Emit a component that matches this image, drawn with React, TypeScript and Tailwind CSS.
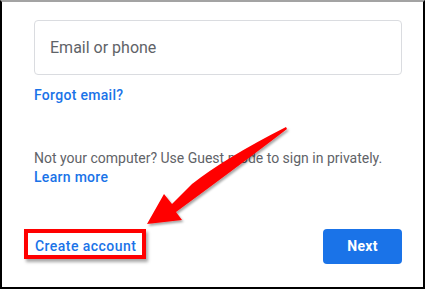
import React from "react";

export default function App() {
  return (
    <div className="w-[426px] h-[290px] bg-white" style={{ fontFamily: "Roboto, 'Liberation Sans', sans-serif" }}>
      <div className="relative w-[425px] h-[289px] border-2 border-black border-t-[#a3a3a3] bg-white">
        <div className="pl-[32px] pt-[18px]">
          <div className="w-[368px] h-[55px] rounded-[4px] border border-[#dadce0] flex items-center pl-[15px]">
            <span className="text-[16px] text-[#5f6368]">Email or phone</span>
          </div>
          <div className="mt-[10px] text-[14px] leading-[20px] font-medium tracking-[0.3px] text-[#1a73e8]">Forgot email?</div>
          <div className="mt-[44px] text-[14px] leading-[19px] text-[#5f6368]">
            Not your computer? Use Guest mode to sign in privately.
            <div className="font-medium tracking-[0.3px] text-[#1a73e8]">Learn more</div>
          </div>
          <div className="mt-[42px] flex items-start justify-between w-[368px]">
            <div className="-ml-[10px] border-4 border-[#ff0000] pl-[7px] pr-[6px] pt-[4px] pb-[0px] text-[14px] leading-[18px] font-medium tracking-[0.45px] text-[#1a73e8] shadow-[2px_3px_3px_rgba(0,0,0,0.35)]">
              Create account
            </div>
            <div className="w-[79px] h-[35px] rounded-[4px] bg-[#1a73e8] text-white text-[14px] font-bold tracking-[0.25px] flex items-center justify-center">
              Next
            </div>
          </div>
        </div>
        <svg className="absolute left-[-2px] top-[-2px] pointer-events-none" width="426" height="290" viewBox="0 0 426 290">
          <defs>
            <filter id="sh" x="-20%" y="-20%" width="140%" height="140%">
              <feDropShadow dx="1.5" dy="2" stdDeviation="1.2" floodColor="#000" floodOpacity="0.35" />
            </filter>
          </defs>
          <path
            d="M286,127 Q225,158 192,184 L172,204 L164,194 L147,224 L182,220 L176,212 Q240,165 287,129 Z"
            fill="#ff0000"
            filter="url(#sh)"
          />
        </svg>
      </div>
    </div>
  );
}
